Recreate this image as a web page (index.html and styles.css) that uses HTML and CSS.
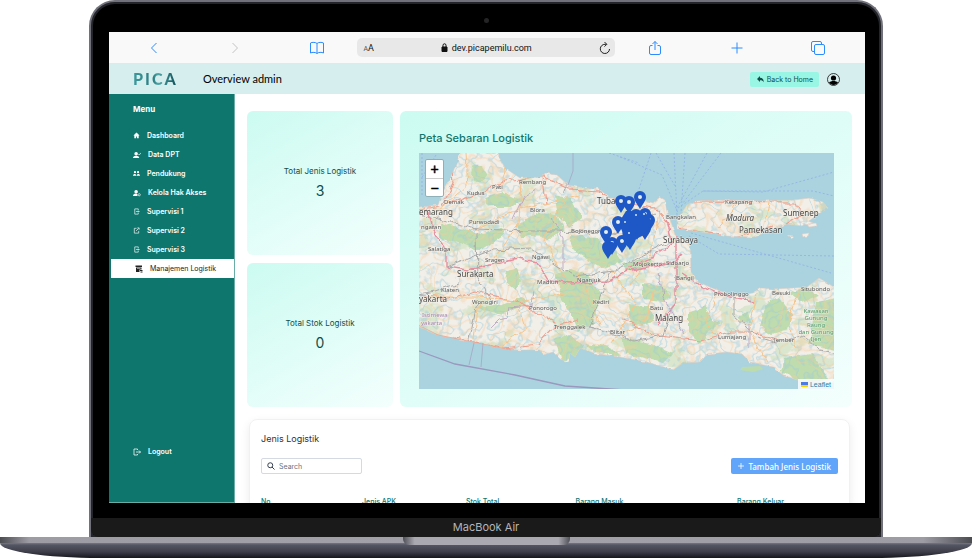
FILE: index.html
```html
<!DOCTYPE html>
<html lang="id">
<head>
<meta charset="utf-8">
<title>PICA - Overview admin</title>
<meta name="viewport" content="width=device-width, initial-scale=1">
<link rel="stylesheet" href="styles.css">
</head>
<body>
<div class="laptop">
  <div class="lid">
    <span class="camera"></span>
    <div class="screen">
      <div class="browser">
        <div class="browser-side browser-side-left">
          <button class="tool" aria-label="Back"><svg width="16" height="16" viewBox="0 0 16 16"><path d="M10.500 3L5.500 8l5 5"/></svg></button>
          <button class="tool tool-off" aria-label="Forward"><svg width="16" height="16" viewBox="0 0 16 16"><path d="M5.500 3l5 5-5 5"/></svg></button>
          <button class="tool" aria-label="Bookmarks"><svg width="16" height="16" viewBox="0 0 16 16"><path d="M8 3.500C7 2.200 3 2 1.500 3v10c1.500-1 5.500-.8 6.500.5 1-1.300 5-1.500 6.500-.5V3C13 2 9 2.200 8 3.500zM8 3.500v10"/></svg></button>
        </div>
        <div class="address">
          <span class="reader"><small>A</small>A</span>
          <span class="host"><svg width="7" height="9" viewBox="0 0 7 9"><path d="M1 4h5v4.500H1z" fill="#111" stroke="#111"/><path d="M2 4V2.300a1.500 1.500 0 013 0V4" fill="none" stroke="#111"/></svg>dev.picapemilu.com</span>
          <button class="reload" aria-label="Reload"><svg width="12" height="14" viewBox="0 0 12 14"><path d="M10.500 8A4.600 4.600 0 116 3.300h1.500M5.500 1l2.300 2.300L5.500 5.600" fill="none" stroke="#222"/></svg></button>
        </div>
        <div class="browser-side browser-side-right">
          <button class="tool" aria-label="Share"><svg width="16" height="16" viewBox="0 0 16 16"><path d="M5.500 5.500H4A1.500 1.500 0 002.500 7v6A1.500 1.500 0 004 14.500h8a1.500 1.500 0 001.500-1.500V7A1.500 1.500 0 0012 5.500h-1.500M8 10V1.500M5.500 4L8 1.500 10.500 4"/></svg></button>
          <button class="tool" aria-label="New tab"><svg width="16" height="16" viewBox="0 0 16 16"><path d="M8 2.500v11M2.500 8h11"/></svg></button>
          <button class="tool" aria-label="Tabs"><svg width="16" height="16" viewBox="0 0 16 16"><rect x="4.500" y="4.500" width="10" height="10" rx="1.500"/><path d="M4.500 11.500H3A1.500 1.500 0 011.500 10V3A1.500 1.500 0 013 1.500h7A1.500 1.500 0 0111.500 3v1.500"/></svg></button>
        </div>
      </div>

      <header class="topbar">
        <span class="logo">PICA</span>
        <h1>Overview admin</h1>
        <a class="home" href="#"><svg width="7" height="7" viewBox="0 0 14 14"><path d="M0 6l6-6v3.500c5 0 8 3 7 9-1-3-3-4-7-4V12z" fill="#134e4a"/></svg>Back to Home</a>
        <button class="avatar" aria-label="Profile"><svg width="13" height="13" viewBox="0 0 26 26"><circle cx="13" cy="13" r="12" fill="none" stroke="#111" stroke-width="1.600"/><circle cx="13" cy="10" r="5.200" fill="#000"/><path d="M4 19c4-4 14-4 18 0-4 6.500-14 6.500-18 0z" fill="#000"/></svg></button>
      </header>

      <div class="app">
        <nav class="sidebar">
          <h2>Menu</h2>
          <ul>
            <li><a href="#"><svg viewBox="0 0 16 16"><path d="M8 1L1 8h2v6h4v-4h2v4h4V8h2z"/></svg>Dashboard</a></li>
            <li><a class="wide" href="#"><svg viewBox="0 0 18 16"><circle cx="7" cy="5" r="4"/><path d="M0 15c0-7 14-7 14 0z"/><path class="line" d="M12 6l2 2 4-5"/></svg>Data DPT</a></li>
            <li><a href="#"><svg viewBox="0 0 16 16"><circle cx="4.500" cy="5" r="2.500"/><circle cx="11.500" cy="5" r="2.500"/><path d="M0 13c0-5 7.500-5 7.500 0zM8.500 13c0-5 7.500-5 7.500 0z"/></svg>Pendukung</a></li>
            <li><a class="wide" href="#"><svg viewBox="0 0 18 16"><circle cx="7" cy="5" r="4"/><path d="M0 15c0-6 8-7 10-4v4z"/><circle class="line" cx="14" cy="12" r="2.500"/></svg>Kelola Hak Akses</a></li>
            <li><a href="#"><svg viewBox="0 0 16 16"><path class="line" d="M12 5V2H4v12h8v-3M7 8h7M12 6l2 2-2 2"/></svg>Supervisi 1</a></li>
            <li><a href="#"><svg viewBox="0 0 16 16"><path class="line" d="M8 3H3v11h10V9M7 9l6-6M10 2h4v4"/></svg>Supervisi 2</a></li>
            <li><a href="#"><svg viewBox="0 0 16 16"><path class="line" d="M12 5V2H4v12h8v-3M7 8h7M12 6l2 2-2 2"/></svg>Supervisi 3</a></li>
            <li class="current"><a class="wide" href="#" aria-current="page"><svg viewBox="0 0 16 16"><path d="M1 1h13v3H1zM2 5h11v4H9v5H2zM10 10h5v2h-5zM11 13h4v2h-4z"/><path d="M4 7h7" stroke="#fff"/></svg>Manajemen Logistik</a></li>
          </ul>
          <a class="wide logout" href="#"><svg viewBox="0 0 16 16"><path class="line" d="M9 4V2H2v12h7v-2M6 8h9M12 5l3 3-3 3"/></svg>Logout</a>
        </nav>

        <main>
          <div class="overview">
            <section class="stat"><h3>Total Jenis Logistik</h3><p>3</p></section>
            <section class="stat"><h3>Total Stok Logistik</h3><p>0</p></section>
            <section class="spread">
              <h2>Peta Sebaran Logistik</h2>
              <div class="map">
                <svg class="tiles" viewBox="0 0 415 236" preserveAspectRatio="xMidYMid slice" role="img" aria-label="Peta Jawa Timur">
                  <defs>
                    <path id="java" d="M-9 54L0 54 19 52 24 37 34 19 43 -5H79L80 4 86 15 101 25 123 24 126 20 138 22 149 32 171 36 179 35 191 45 221 46 234 50 241 44 246 47 248 59 253 72 256 82 271 89 272 119 279 129 298 137 314 142 334 140 343 135 354 136 374 135 388 134 400 125 420 137V230L378 227 364 222 354 214 331 209 323 201 308 199 289 201 281 209 264 210 254 217 228 209 201 204 178 201 161 195 156 204 151 200 149 209 141 206 134 199 124 202 121 197 91 197 81 195 54 189 34 185 18 182 -9 170Z"/>
                    <path id="madura" d="M258 67L268 52 276 48 301 47 341 48 374 47 391 45 404 49 409 55 398 62 383 73 368 71 348 79 334 84 308 83 291 80 268 77 258 76Z"/>
                    <clipPath id="land"><use href="#java"/><use href="#madura"/></clipPath>
                    <filter id="rough" x="-5%" y="-5%" width="110%" height="110%"><feTurbulence type="fractalNoise" baseFrequency=".09" numOctaves="3" seed="4"/><feDisplacementMap in="SourceGraphic" scale="7" xChannelSelector="R" yChannelSelector="G"/></filter>
                    <filter id="coast"><feTurbulence type="fractalNoise" baseFrequency=".15" numOctaves="2" seed="2"/><feDisplacementMap in="SourceGraphic" scale="3" xChannelSelector="R" yChannelSelector="G"/></filter>
                    <filter id="rivers" x="0" y="0" width="100%" height="100%" color-interpolation-filters="sRGB"><feTurbulence type="fractalNoise" baseFrequency=".05" numOctaves="3" seed="8"/><feColorMatrix values="0 0 0 0 .62  0 0 0 0 .80  0 0 0 0 .86  1 0 0 0 0"/><feComponentTransfer><feFuncA type="table" tableValues="0 0 0 0 0 0 0 0 0 .9 0 0 0 .9 0 0 0 0 0 0 0"/></feComponentTransfer></filter>
                    <filter id="lanes" x="0" y="0" width="100%" height="100%" color-interpolation-filters="sRGB"><feTurbulence type="fractalNoise" baseFrequency=".035" numOctaves="2" seed="21"/><feColorMatrix values="0 0 0 0 .97  0 0 0 0 .80  0 0 0 0 .60  0 1 0 0 0"/><feComponentTransfer><feFuncA type="table" tableValues="0 0 0 0 0 0 0 0 0 0 0 0 0 .9 0 0 0 .9 0 0 0 .9 0 0 0 0 0 0 0 0"/></feComponentTransfer></filter>
                    <filter id="woods" x="0" y="0" width="100%" height="100%" color-interpolation-filters="sRGB"><feTurbulence type="fractalNoise" baseFrequency=".04 .06" numOctaves="4" seed="13"/><feColorMatrix values="0 0 0 0 .75  0 0 0 0 .86  0 0 0 0 .68  0 0 12 0 -6.800"/></filter>
                    <filter id="soft"><feGaussianBlur stdDeviation=".45"/></filter>
                    <g id="pin"><path d="M0 0C-2-4-6-8-6-12a6 6 0 0112 0c0 4-4 8-6 12z" fill="#1e58c6"/><circle cy="-12" r="2" fill="#e4edf0"/></g>
                  </defs>
                  <rect width="415" height="236" fill="#aad3df"/>
                  <g filter="url(#soft)">
                    <g filter="url(#coast)" fill="#f2efe9" stroke="#e3c9bd" stroke-width=".5"><use href="#java"/><use href="#madura"/><path d="M379 69l10-1 5 2-5 2zM388 71l9-1 1 3-8 1zM368 83l7 1-3 2zM383 81l7-1-1 3-5 1z"/></g>
                    <g clip-path="url(#land)">
                      <rect width="415" height="236" filter="url(#woods)" opacity=".45"/>
                      <g fill="#bedcae" filter="url(#rough)">
                        <path d="M54 12l10 0 5 8-4 8-9 0-5-8zM66 45l20-6 16 8-10 7-20 0zM98 72l22-14 20 5 6 14-14 8-30-1zM136 42l16 4 10 18-12 10-12-14zM20 70l15 4 30 8 18-8 2 8-24 16-14-6-26-8zM150 83l28 2 16 10 10 14-22 6-24-14zM88 117l10-2 4 12-6 11-10-8zM136 122l16-7 16 6 14 22-8 26-14 10-6-14-12-20zM136 187l14-6 14 10-6 12-16 4z"/>
                        <path d="M224 131l18 2 10 10-8 6-20-2zM269 160l18-6 6 12 10 3-14 8-8 14-12-12zM347 150l12-6 14 18-4 14-16 5-12-8zM370 139l20-4 10 8-18 6zM398 150l18-5v52l-26-6zM365 205l28-4 6 10 10 16-32 4-14-14zM320 162l9-2 2 8-10 2zM202 185l30 5 22 10-10 10-38-10zM210 150l20 4 6 14-24 4zM54 155l25-3 24-8 8 5-28 13zM204 110l24-6 8 8-28 6zM165 190l28 4 8 8-26-3z"/>
                      </g>
                      <rect width="415" height="236" filter="url(#rivers)" opacity=".55"/>
                      <rect width="415" height="236" filter="url(#lanes)" opacity=".45"/>
                      <g fill="none" filter="url(#rough)">
                        <path stroke="#ee9f8c" stroke-width="1.200" d="M0 57L25 52 62 40 85 28 124 23 149 36 180 38 205 51 235 55 252 73M276 48l100 1 8 12-17 10M258 75l56 9 40-10M36 185l47 10 36-4 17-18 24-6M203 164l30 18 48 6 30-9 20 0 26 8M32 0l2 30-10 22M124 24l3 26M0 142l30 4 26-8 40 10 40 20"/>
                        <path stroke="#f5c58e" d="M46 0l2 34-28 23M48 80l52-24 60-14M102 28l-2 42-25 35M146 46l-20 40 20 40M7 144l52 0 48 4 38-8M99 150l8 26-26 18M239 130l-16 40-30 18M300 138l-14 32 18 18M338 140l-8 40 20 30M351 50l-4 20M318 50l-18 24M380 138l-10 30 6 26M190 116l28 34-18 28M240 60l-8 40-20 32M160 120l20 52M60 150l-5 36M90 0L82 36"/>
                        <path stroke="#e58f9f" stroke-width="1.400" d="M10 58l4 20 14 20 0 16 20 3 28-6 22-5 20 4 10 16 22 5 38-2 24-12 42-8 9-9M257 80v70l-18 22M263 120l18 12 30 12 24 4M248 68l6 22-20 14-24 10"/>
                        <path stroke="#aba9a9" stroke-width="1" d="M0 61l58 15 52 2 26 0 60 2 40-20M28 114l45-17 40-2 26 18 16 10 40-5 24-14 34-16M57 80l1 45 16 24M192 118l-22 55 32 10 12 6 30-6 8-24M314 142v20l24 22 20 6 26-8 16 15 16 3M154-5l-2 25-8 22M58 150l-7 36-3 22M0 142l15-3 24-8"/>
                      </g>
                      <g fill="none" stroke="#b4a0bf" stroke-width=".8" filter="url(#rough)"><path d="M72 175l8-8 8-2 2-10 22-2 2-14M118 36l-14 8-10 22M132 65l12 20 0 30M148 30l5-28M240 120l4 24 22 36M308 90l-20 16M330 195l0-26"/></g>
                    </g>
                    <path d="M-1 172l20 10 35 7 38 8" fill="none" stroke="#ee9f8c" stroke-width=".7"/>
                    <path d="M323 214l18-1 3 3-10 3-13-2z" fill="#bddcae"/>
                    <path d="M0 198l36 13 60 11 50 11 60 4" fill="none" stroke="#9a98bd" stroke-width="1.300"/>
                    <path d="M55 190l-5 22M64 190l-2 24M154 0v18l-5 14" fill="none" stroke="#a39fbe" stroke-width=".7"/>
                    <path d="M201 4l42 18 16 38M232 0l-12 36M237 0l19 33M255 0l3 62M266 0l-4 60M288 0l-30 55M302 0l-38 50M259 55l25-17 60 1 71-20M284 38l110 0 21 5M270 83l30 18 115 2M272 80l140 40M3 0v44M17 2L2 26M190 0l30 10" fill="none" stroke="#8fb0e4" stroke-width=".8" stroke-dasharray="2 2"/>
                    <g class="places">
                      <text x="100" y="31">Rembang</text><text x="73" y="36">Pati</text><text x="48" y="42">Kudus</text><text x="25" y="51">Demak</text><text x="50" y="71">Purwodadi</text><text x="111" y="59">Blora</text><text x="152" y="80">Bojonegoro</text><text x="66" y="109">Sragen</text><text x="113" y="106">Ngawi</text><text x="2" y="76">ngaran</text><text x="9" y="98">Salatiga</text><text x="22" y="139">Klaten</text><text x="53" y="151">Wonogiri</text><text x="118" y="131">Madiun</text><text x="158" y="129">Nganjuk</text><text x="110" y="157">Ponorogo</text><text x="174" y="151">Kediri</text><text x="135" y="176">Trenggalek</text><text x="191" y="181">Blitar</text><text x="231" y="157">Batu</text><text x="214" y="113">Mojokerto</text><text x="247" y="112">Sidoarjo</text><text x="257" y="127">Bangil</text><text x="295" y="143">Probolinggo</text><text x="299" y="186">Lumajang</text><text x="355" y="189">Jember</text><text x="353" y="142">Besuki</text><text x="382" y="138">Situbondo</text><text x="247" y="66">Bangkalan</text><text x="306" y="51">Ketapang</text>
                      <g class="city"><text x="0" y="62">emarang</text><text x="178" y="51">Tuban</text><text x="244" y="90">Surabaya</text><text x="38" y="124">Surakarta</text><text x="0" y="149">yakarta</text><text x="236" y="168">Malang</text><text x="364" y="63">Sumenep</text><text x="320" y="80">Pamekasan</text><text x="307" y="68" font-style="italic">Madura</text></g>
                      <g class="region"><text x="3" y="164">Istimewa</text><text x="2" y="172">yakarta</text></g>
                      <g class="park"><text x="397" y="160">Kawasan</text><text x="397" y="167">Gunung</text><text x="397" y="174">Raung</text><text x="397" y="181">dan Gunung</text><text x="397" y="188">Ijen</text></g>
                    </g>
                  </g>
                  <use href="#pin" x="221" y="56"/><use href="#pin" x="202" y="60"/><use href="#pin" x="210" y="61"/><use href="#pin" x="199" y="81"/><use href="#pin" x="187" y="91"/><use href="#pin" x="193" y="102"/><use href="#pin" x="189" y="106"/><use href="#pin" x="217" y="74"/><use href="#pin" x="226" y="73"/><use href="#pin" x="230" y="79"/><use href="#pin" x="226" y="87"/><use href="#pin" x="211" y="97"/><use href="#pin" x="203" y="100"/><use href="#pin" x="207" y="84"/><use href="#pin" x="218" y="87"/><path d="M202 66l5-8 18 0 8 10-4 12-14 7-6 7-5-8zM184 92l5-4 8 2-1 6-7 8z" fill="#1e58c6"/><g fill="#d5e4f0"><circle cx="206" cy="69" r="1"/><circle cx="217" cy="62" r="1"/><circle cx="210" cy="80" r="1"/><circle cx="225" cy="61" r="1"/></g>
                </svg>
                <div class="zoom"><button aria-label="Zoom in">+</button><button aria-label="Zoom out">−</button></div>
                <a class="credit" href="#"><svg width="7" height="5" viewBox="0 0 7 5"><path fill="#4c7be1" d="M0 0h7v3H0z"/><path fill="#ffd500" d="M0 3h7v2H0z"/></svg>Leaflet</a>
              </div>
            </section>
          </div>

          <section class="stock">
            <h2>Jenis Logistik</h2>
            <div class="actions">
              <label class="search"><svg width="8" height="8" viewBox="0 0 16 16"><circle cx="6.500" cy="6.500" r="5" fill="none" stroke="#374151" stroke-width="2"/><path d="M10 10l5 5" stroke="#374151" stroke-width="2"/></svg><input type="search" placeholder="Search" aria-label="Search"></label>
              <button class="add"><svg width="6" height="6" viewBox="0 0 6 6"><path d="M3 0v6M0 3h6" stroke="#fff" stroke-width=".8"/></svg>Tambah Jenis Logistik</button>
            </div>
            <table>
              <thead><tr><th class="c-no">No</th><th class="c-kind">Jenis APK</th><th class="c-total">Stok Total</th><th class="c-in">Barang Masuk</th><th>Barang Keluar</th></tr></thead>
            </table>
          </section>
        </main>
      </div>
    </div>
    <div class="chin">MacBook Air</div>
  </div>
  <div class="base"><div class="deck"><span class="notch"></span></div><div class="belly"></div></div>
</div>
</body>
</html>
```
FILE: styles.css
```css
* { box-sizing: border-box; }
body { margin: 0; background: #fff; color: #111; font-family: Inter, "Noto Sans", sans-serif; font-size: 8px; }
h1, h2, h3, p, ul { margin: 0; padding: 0; }
h1, h2, h3 { font-weight: 400; }
ul { list-style: none; }
button { border: 0; background: none; padding: 0; font: inherit; color: inherit; }
a { color: inherit; text-decoration: none; }
svg { display: block; flex: none; }

.laptop { display: flex; flex-direction: column; height: 100vh; overflow: hidden; }
.lid { position: relative; flex: 1; min-height: 0; display: flex; flex-direction: column; margin: 0 89px; padding: 30px 16px 0 18px; background: #000; border: solid #70717a; border-width: 2px 2px 0; border-radius: 26px 26px 0 0; box-shadow: inset 0 0 0 2px #24252a; }
.camera { position: absolute; top: 16px; left: 50%; width: 5px; height: 5px; margin-left: -2px; border-radius: 50%; background: #242426; }
.screen { flex: 1; min-height: 0; display: flex; flex-direction: column; overflow: hidden; background: #fff; }
.chin { margin: 15px -16px 0 -18px; height: 19px; background: #1a1a1a; color: #b5b5b8; font: 11px/19px Inter, sans-serif; text-align: center; border-radius: 0 0 8px 8px; }

.base { flex: none; }
.deck { position: relative; height: 6px; background: linear-gradient(90deg, #4b4b52, #9d9ca5 3%, #a3a2aa 50%, #9d9ca5 95%, #4b4b52); }
.notch { position: absolute; top: 0; left: 50%; width: 167px; height: 8px; margin-left: -83px; border-radius: 0 0 6px 6px; background: linear-gradient(90deg, #4f4f57, #aaa9b1 7%, #aaa9b1 93%, #4f4f57); }
.belly { height: 15px; background: linear-gradient(#777783, #555663 2px, #3c3d48 9px, #16161d); border-radius: 0 0 100px 100px / 0 0 15px 15px; }

.browser { flex: none; display: flex; align-items: center; height: 32px; background: #f9f9f9; border-bottom: 1px solid #e6e6e6; }
.browser-side { flex: 1; display: flex; justify-content: space-around; }
.browser-side-left { padding-left: 4px; }
.browser-side-right { padding-right: 6px; }
.tool svg { fill: none; stroke: #2b8cff; stroke-width: 1; }
.tool-off svg { stroke: #c4c4c6; }
.address { flex: 0 0 34%; display: flex; align-items: center; justify-content: space-between; height: 19px; padding: 0 4px 0 6px; border-radius: 5px; background: #e8e8e8; font: 9px Roboto, sans-serif; }
.reader small { font-size: 7px; color: #555; }
.host { display: flex; align-items: center; gap: 4px; }

.topbar { flex: none; display: flex; align-items: center; height: 30px; padding: 0 25px 0 24px; background: #d6eeee; }
.logo { width: 70px; font: 900 16px/16px Lato, sans-serif; letter-spacing: 2px; color: transparent; background: linear-gradient(90deg, #3f9a9c, #2b7a80 20px, #4fa6a8 25px, #0f4f58 44px); background-clip: text; }
.topbar h1 { flex: 1; font: 11px/16px Lato, sans-serif; color: #000; }
.home { display: flex; align-items: center; gap: 3px; height: 15px; padding: 0 6px 0 7px; border-radius: 2px; background: #99f6e4; color: #134e4a; font-size: 7px; }
.avatar { margin-left: 8px; }

.app { flex: 1; min-height: 0; display: flex; margin-right: 1px; }
.sidebar { flex: none; width: 126px; display: flex; flex-direction: column; background: #0f766e; border-right: 1px solid #6aada7; border-bottom: 1px solid #6aada7; color: #fff; font-size: 7px; font-weight: 600; }
.sidebar h2 { padding: 9px 24px 0; height: 32px; font-size: 8px; line-height: 12px; font-weight: 700; }
.sidebar a { display: flex; align-items: center; gap: 7px; height: 19px; padding-left: 24px; }
.sidebar svg { width: 7px; height: 7px; fill: currentColor; }
.sidebar .wide svg { width: 8px; height: 8px; }
.sidebar .line { fill: none; stroke: currentColor; stroke-width: 1.500; }
.sidebar .current { margin-left: 2px; background: #fff; color: #222; font-weight: 400; }
.sidebar .logout { margin-top: auto; margin-bottom: 41px; }

main { flex: 1; min-width: 0; padding: 17px 12px 0; }
.overview { display: grid; grid-template-columns: 146px 1fr; grid-template-rows: 1fr 1fr; gap: 8px 7px; }
.stat, .spread { border-radius: 6px; background: linear-gradient(150deg, #ccfbf1, #f3fffd); }
.stat { display: flex; flex-direction: column; align-items: center; justify-content: center; gap: 5px; padding-bottom: 2px; color: #134e4a; }
.stat h3 { font-size: 8px; line-height: 12px; }
.stat p { font-size: 14px; line-height: 18px; }
.spread { grid-column: 2; grid-row: 1 / 3; padding: 18px 18px 18px 19px; }
.spread h2 { margin-bottom: 6px; font-size: 11px; line-height: 18px; font-weight: 500; color: #0f766e; }
.map { position: relative; height: 236px; overflow: hidden; font-family: "Liberation Sans", sans-serif; }
.tiles { width: 100%; height: 100%; }
.places { font: 6px "Noto Sans", sans-serif; fill: #555; stroke: #f6f3ee; stroke-width: 1px; stroke-opacity: .6; paint-order: stroke; }
.city { font-size: 8px; fill: #444; }
.region { fill: #a685b0; }
.park { fill: #4c9a63; text-anchor: middle; }
.zoom { position: absolute; top: 6px; left: 6px; display: grid; width: 19px; border: 1px solid #8fb0b8; border-radius: 2px; background: #fff; }
.zoom button { height: 18px; font: 14px/16px "Liberation Sans", sans-serif; color: #000; -webkit-text-stroke: 0.5px #000; }
.zoom button + button { border-top: 1px solid #ccc; }
.credit { position: absolute; right: 0; bottom: 0; display: flex; align-items: center; gap: 2px; height: 10px; padding: 0 3px; background: rgba(255, 255, 255, .8); color: #2a82a8; font-size: 7px; }

.stock { margin: 12px 2px 0; padding: 12px 11px 0; height: 140px; border: 1px solid #f1f1f3; border-radius: 8px; box-shadow: 0 3px 10px rgba(0, 0, 0, .08); }
.stock h2 { font-size: 9px; line-height: 14px; color: #333; }
.actions { display: flex; justify-content: space-between; margin-top: 12px; }
.search { display: flex; align-items: center; gap: 4px; width: 101px; height: 16px; padding: 0 5px; border: 1px solid #d5d9e2; border-radius: 2px; }
.search input { width: 100%; min-width: 0; padding: 0; border: 0; outline: 0; background: none; font: inherit; font-size: 7px; }
.search input::placeholder { color: #6b7280; }
.add { display: flex; align-items: center; gap: 4px; height: 16px; padding: 0 7px; border-radius: 2px; background: #60a5fa; color: #fff; font-family: "Noto Sans", sans-serif; font-size: 8px; font-weight: 500; }
table { width: 100%; margin-top: 22px; border-collapse: collapse; table-layout: fixed; }
th { padding: 0; font-size: 7px; line-height: 12px; font-weight: 500; text-align: left; color: #0f766e; }
th + th { padding-left: 3px; }
.c-no { width: 17%; }
.c-kind { width: 18%; }
.c-total { width: 19%; }
.c-in { width: 28%; }
```
